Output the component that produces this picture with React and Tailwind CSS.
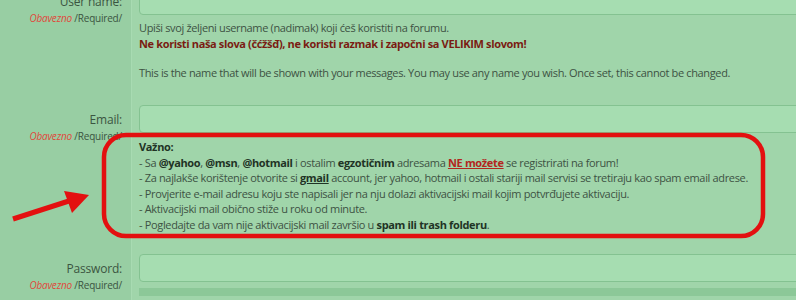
import React from 'react';

function Row({ label, children }) {
  return (
    <div className="flex">
      <div className="w-[132px] shrink-0 bg-[#98cea3] border-r border-[#a8dbb2] text-right pr-[9px] pt-[6px]">
        <div className="text-[12px] leading-[18px] tracking-[-0.2px] text-[#3b5541]">{label}</div>
        <div className="text-[10px] leading-[14px] tracking-[-0.2px] text-[#3b5541]">
          <span className="italic text-[#e0483c]">Obavezno</span> /Required/
        </div>
      </div>
      <div className="flex-1 pl-[7px]">{children}</div>
    </div>
  );
}

function Field() {
  return <div className="w-[720px] h-[28px] bg-[#a6ddb1] border border-[#84c291] rounded-[4px]" />;
}

export default function App() {
  return (
    <div className="relative w-[796px] h-[300px] overflow-hidden bg-[#a0d5aa] font-['Open_Sans',sans-serif]">
      <div className="-mt-[13px]">
        <Row label="User name:">
          <Field />
          <div className="pt-[5px] pb-[24px] text-[11px] leading-[16px] tracking-[-0.36px] text-[#3d5243]">
            <div>Upiši svoj željeni username (nadimak) koji ćeš koristiti na forumu.</div>
            <div className="font-bold text-[#7a1c12]">
              Ne koristi naša slova (čćžšđ), ne koristi razmak i započni sa VELIKIM slovom!
            </div>
            <div className="mt-[13px]">
              This is the name that will be shown with your messages. You may use any name you wish. Once set, this cannot be changed.
            </div>
          </div>
        </Row>
        <Row label="Email:">
          <Field />
          <div className="pt-[6px] pb-[21px] text-[11px] leading-[15.6px] tracking-[-0.34px] text-[#3d5243]">
            <div className="font-bold text-[#1f3325]">Važno:</div>
            <div>
              - Sa <b className="text-[#1f3325]">@yahoo</b>, <b className="text-[#1f3325]">@msn</b>,{' '}
              <b className="text-[#1f3325]">@hotmail</b> i ostalim <b className="text-[#1f3325]">egzotičnim</b> adresama{' '}
              <b className="underline text-[#b3261e]">NE možete</b> se registrirati na forum!
            </div>
            <div>
              - Za najlakše korištenje otvorite si <b className="underline text-[#1f3325]">gmail</b> account, jer yahoo, hotmail i ostali stariji mail servisi se tretiraju kao spam email adrese.
            </div>
            <div>- Provjerite e-mail adresu koju ste napisali jer na nju dolazi aktivacijski mail kojim potvrđujete aktivaciju.</div>
            <div>- Aktivacijski mail obično stiže u roku od minute.</div>
            <div>
              - Pogledajte da vam nije aktivacijski mail završio u <b className="text-[#1f3325]">spam ili trash folderu</b>.
            </div>
          </div>
        </Row>
        <Row label="Password:">
          <Field />
          <div className="mt-[6px] h-[8px] w-[720px] bg-[#8cc898]" />
          <div className="h-[40px]" />
        </Row>
      </div>

      <svg className="absolute inset-0 pointer-events-none" width="796" height="300" viewBox="0 0 796 300">
        <rect x="104" y="135" width="659" height="101" rx="22" fill="none" stroke="#e31010" strokeWidth="4.5" />
        <line x1="13" y1="219" x2="72" y2="200" stroke="#e31010" strokeWidth="5" />
        <polygon points="89,195 64,191 72,213" fill="#e31010" />
      </svg>
    </div>
  );
}
